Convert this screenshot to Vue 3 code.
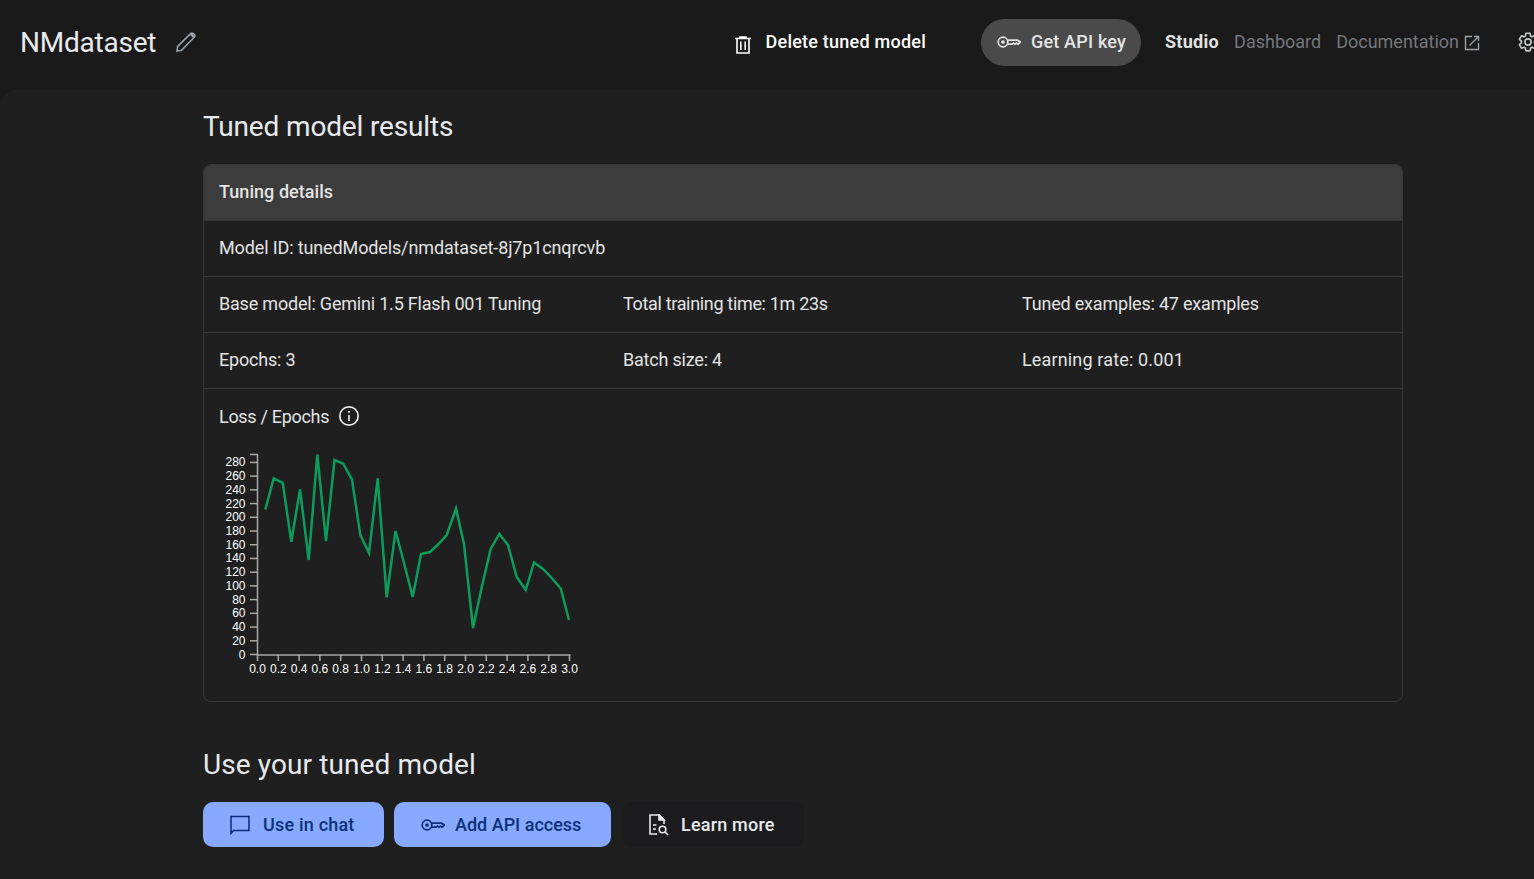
<script setup>
const rows = [
  ['Base model: Gemini 1.5 Flash 001 Tuning', 'Total training time: 1m 23s', 'Tuned examples: 47 examples'],
  ['Epochs: 3', 'Batch size: 4', 'Learning rate: 0.001'],
]
const pts = '265.3,509.5 273.7,478.3 282.7,482.8 291.3,541.7 300,489.5 308.7,560 317.3,454.5 326,541 334.5,460 343,463.5 352,479.5 360.3,535 369,553 377.7,478.3 386.7,597.3 395.5,531 404,563 412.7,597 421,554 430,552 438,544.5 446.7,535 456,508.5 464,544 473,628 482,586 490.7,549 499.3,534 508,545 516.7,577 525.7,590 534,562.5 543,569 551.7,578 560.7,588.5 569,620'
const yTicks = Array.from({ length: 15 }, (_, i) => ({ label: String(i * 20), y: 654.5 - i * 13.72 }))
const xTicks = Array.from({ length: 16 }, (_, i) => ({ label: (i * 0.2).toFixed(1), x: 257.5 + i * 20.8 }))
</script>

<template>
  <div class="page">
    <header class="top">
      <div class="name">
        <h1>NMdataset</h1>
        <svg class="pencil" width="22" height="22" viewBox="0 0 22 22" fill="none" stroke="#9aa0a6" stroke-width="1.6">
          <path d="M2 20l.6-4.600L15.600 2.600a1.900 1.900 0 0 1 2.700 0l1 1a1.900 1.900 0 0 1 0 2.700L6.500 19.200z" />
          <path d="M16 3l3 3" stroke-width="2.600" />
        </svg>
      </div>
      <div class="actions">
        <button class="delete">
          <svg width="16" height="18" viewBox="0 0 16 18" fill="none" stroke="#fff" stroke-width="1.600">
            <path d="M0 2.500h16M5 2.500V1h6v1.500M2 2.500V17h12V2.500M5.800 5.500V14M10.200 5.500V14" />
          </svg>
          <span>Delete tuned model</span>
        </button>
        <button class="api">
          <svg width="24" height="12" viewBox="0 0 24 12" fill="none" stroke="#e3e3e3" stroke-width="1.700">
            <circle cx="6" cy="6" r="4.800" />
            <circle cx="6" cy="6" r="1" fill="#e3e3e3" />
            <path d="M10.800 4.200H20.500L23.500 6 21 8.200 19.500 7 18 8.200 16.500 7 15 8.200H10.800" />
          </svg>
          <span>Get API key</span>
        </button>
        <nav class="nav">
          <a class="active">Studio</a>
          <a>Dashboard</a>
          <a class="doc">Documentation
            <svg width="16" height="16" viewBox="0 0 16 16" fill="none" stroke="#9aa0a6" stroke-width="1.400">
              <path d="M8 1.500H1.500v13h13V8" />
              <path d="M10 1.500h4.500V6M14.500 1.500L5.500 10.500" />
            </svg>
          </a>
        </nav>
        <svg class="gear" width="22" height="22" viewBox="0 0 24 24" fill="none" stroke="#c4c7c5" stroke-width="1.800">
          <circle cx="12" cy="12" r="3.400" />
          <path d="M19.140 12.940c.04-.3.06-.61.06-.94 0-.32-.02-.64-.07-.94l2.030-1.580c.18-.14.23-.41.12-.61l-1.920-3.320c-.12-.22-.37-.29-.59-.22l-2.390.96c-.5-.38-1.030-.7-1.620-.94l-.36-2.540c-.04-.24-.24-.41-.48-.41h-3.840c-.24 0-.43.17-.47.41l-.36 2.540c-.59.24-1.130.57-1.620.94l-2.390-.96c-.22-.08-.47 0-.59.22L2.740 8.870c-.12.21-.08.47.12.61l2.030 1.580c-.05.3-.09.63-.09.94s.02.64.07.94l-2.030 1.580c-.18.14-.23.41-.12.61l1.920 3.320c.12.22.37.29.59.22l2.390-.96c.5.38 1.030.7 1.620.94l.36 2.540c.05.24.24.41.48.41h3.840c.24 0 .44-.17.47-.41l.36-2.540c.59-.24 1.130-.56 1.620-.94l2.390.96c.22.08.47 0 .59-.22l1.920-3.320c.12-.22.07-.47-.12-.61l-2.010-1.580z" />
        </svg>
      </div>
    </header>

    <main class="content">
      <h2 class="title first">Tuned model results</h2>
      <section class="card">
        <div class="row head">Tuning details</div>
        <div class="row model">Model ID: tunedModels/nmdataset-8j7p1cnqrcvb</div>
        <div v-for="(r, i) in rows" :key="i" class="row cols">
          <span v-for="c in r" :key="c" :class="{ rate: c.startsWith('Learning'), tight: c.startsWith('Total') }">{{ c }}</span>
        </div>
        <div class="loss">
          <div class="loss-title">
            <span>Loss / Epochs</span>
            <svg width="22" height="22" viewBox="0 0 22 22" fill="none" stroke="#e8eaed" stroke-width="1.700">
              <circle cx="11" cy="11" r="9.200" />
              <path d="M11 10v6" />
              <path d="M11 6v1.800" stroke-width="2" />
            </svg>
          </div>
          <svg class="chart" width="400" height="250" viewBox="204 440 400 250">
            <g stroke="#a8a8a8" stroke-width="1.500" fill="none">
              <path d="M250 454.500H257.500V655H570.500" />
              <path v-for="t in yTicks" :key="t.label" :d="`M250 ${t.y}H257`" />
              <path v-for="t in xTicks" :key="t.label" :d="`M${t.x} 655V661`" />
            </g>
            <g class="tick y">
              <text v-for="t in yTicks" :key="t.label" x="245.500" :y="t.y + 4">{{ t.label }}</text>
            </g>
            <g class="tick x">
              <text v-for="t in xTicks" :key="t.label" :x="t.x" y="673">{{ t.label }}</text>
            </g>
            <polyline :points="pts" fill="none" stroke="#0b9d5e" stroke-width="2.500" />
          </svg>
        </div>
      </section>

      <h2 class="title second">Use your tuned model</h2>
      <div class="buttons">
        <button class="btn blue chat">
          <svg width="20" height="20" viewBox="0 0 20 20" fill="none" stroke="#0b3278" stroke-width="1.600">
            <path d="M1 18.500V1.500h18v14H3.500z" />
          </svg>
          <span>Use in chat</span>
        </button>
        <button class="btn blue access">
          <svg width="24" height="12" viewBox="0 0 24 12" fill="none" stroke="#0b3278" stroke-width="1.700">
            <circle cx="6" cy="6" r="4.800" />
            <circle cx="6" cy="6" r="1" fill="#0b3278" />
            <path d="M10.800 4.200H20.500L23.500 6 21 8.200 19.500 7 18 8.200 16.500 7 15 8.200H10.800" />
          </svg>
          <span>Add API access</span>
        </button>
        <button class="btn dark">
          <svg width="20" height="22" viewBox="0 0 20 22" fill="none" stroke="#e8eaed" stroke-width="1.600">
            <path d="M8 20H1V1h9l5 5v4" />
            <path d="M10 1l5 5h-5z" fill="#e8eaed" />
            <path d="M4 11h3.500M4 15h3" />
            <circle cx="13.500" cy="15.500" r="3.300" />
            <path d="M16 18l3 3" />
          </svg>
          <span>Learn more</span>
        </button>
      </div>
    </main>
  </div>
</template>

<style>
html, body { margin: 0; overflow: hidden; background: #1a1a1a; }
</style>

<style scoped>
.page {
  width: 1534px;
  height: 879px;
  overflow: hidden;
  background: #1a1a1a;
  font-family: Roboto, "Noto Sans", sans-serif;
  color: #e3e3e3;
}
button { font: inherit; border: none; cursor: pointer; }
.top {
  height: 90px;
  box-sizing: border-box;
  padding: 0 0 6px 20px;
  display: flex;
  align-items: center;
  justify-content: space-between;
  white-space: nowrap;
}
.name { display: flex; align-items: center; gap: 19px; }
h1 { margin: 0; font-size: 28px; font-weight: 400; color: #e8eaed; letter-spacing: -0.22px; }
.actions { display: flex; align-items: center; margin-right: -5px; flex: none; }
.delete {
  display: flex;
  align-items: center;
  gap: 15px;
  background: none;
  color: #fff;
  font-size: 18px;
  font-weight: 500;
  letter-spacing: 0.23px;
  margin-right: 55px;
  padding: 0;
}
.delete svg { margin-top: 6px; }
.delete span { margin-bottom: 2px; }
.api {
  display: flex;
  align-items: center;
  gap: 10px;
  height: 47px;
  width: 160px;
  box-sizing: border-box;
  padding: 0 0 0 16px;
  border-radius: 24px;
  background: #4a4a4a;
  color: #e3e3e3;
  font-size: 18px;
  font-weight: 500;
  letter-spacing: 0.2px;
}
.api span { margin-bottom: 2px; }
.nav { display: flex; align-items: center; gap: 15px; margin-left: 24px; margin-right: 37px; padding-bottom: 2px; font-size: 18px; color: #75777b; }
.nav a { display: flex; align-items: center; gap: 5px; }
.nav svg { margin-top: 3px; }
.nav .active { color: #e3e3e3; font-weight: 700; letter-spacing: 0.3px; }
.content {
  height: 789px;
  box-sizing: border-box;
  padding: 0 131px 0 203px;
  background: #1f1f1f;
  border-top-left-radius: 16px;
}
.title { margin: 0; font-size: 28px; font-weight: 400; line-height: 36px; color: #e8eaed; }
.first { padding-top: 19px; margin-bottom: 19px; letter-spacing: -0.15px; }
.second { margin-top: 45px; margin-bottom: 19px; letter-spacing: 0.1px; }
.card {
  width: 1200px;
  box-sizing: border-box;
  height: 538px;
  border: 1px solid #383838;
  border-radius: 8px;
  overflow: hidden;
}
.row {
  height: 56px;
  box-sizing: border-box;
  padding: 0 0 2px 15px;
  display: flex;
  align-items: center;
  font-size: 18px;
  letter-spacing: -0.2px;
  border-bottom: 1px solid #383838;
}
.head { background: #3c3c3c; font-weight: 500; letter-spacing: 0.05px; border-bottom-color: #333; }
.model { letter-spacing: -0.13px; }
.cols { display: grid; grid-template-columns: 404px 399px 1fr; }
.rate { letter-spacing: 0.15px; }
.tight { letter-spacing: -0.33px; }
.loss { padding: 15px 15px 0; }
.loss-title { display: flex; align-items: center; gap: 9px; font-size: 18px; height: 24px; letter-spacing: -0.3px; }
.chart { display: block; margin: 12px 0 0 -15px; }
.tick text { font-family: "Liberation Sans", Arial, sans-serif; font-size: 12px; fill: #fff; }
.tick.y text { text-anchor: end; }
.tick.x text { text-anchor: middle; }
.buttons { display: flex; gap: 10px; }
.btn {
  height: 45px;
  display: flex;
  align-items: center;
  border-radius: 10px;
  font-size: 18px;
  font-weight: 500;
  box-sizing: border-box;
  letter-spacing: 0.2px;
}
.blue { background: #87a9ff; color: #0b3278; }
.chat { width: 181px; padding-left: 27px; gap: 13px; }
.access { width: 217px; padding-left: 27px; gap: 10px; letter-spacing: 0; }
.dark { width: 182px; padding-left: 27px; gap: 12px; margin-left: 1px; background: #1c1c1e; color: #e8eaed; }
</style>
